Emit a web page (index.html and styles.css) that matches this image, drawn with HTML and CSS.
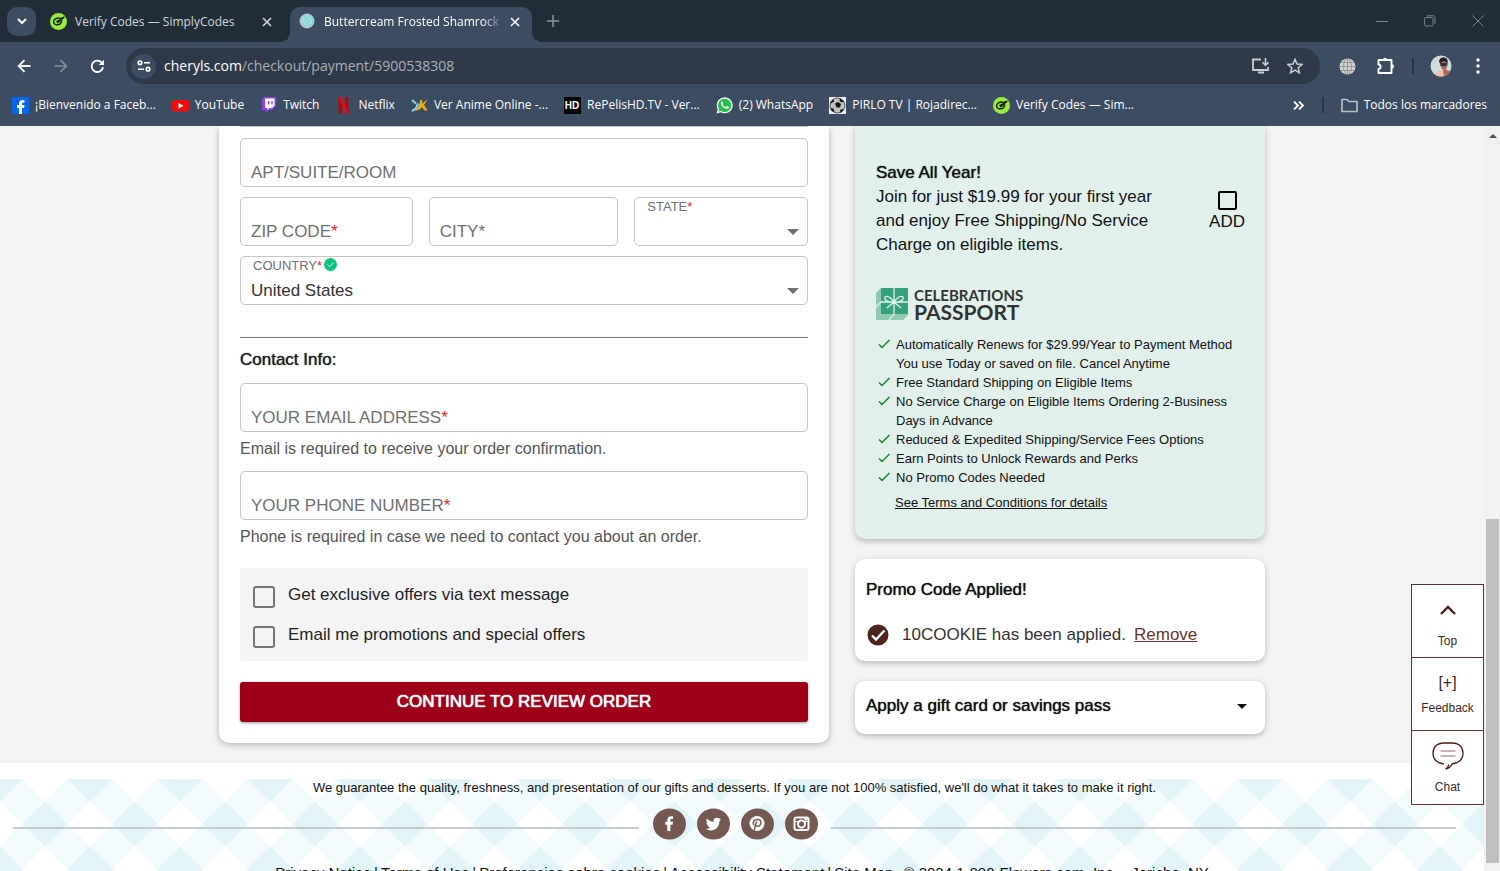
FILE: index.html
```html
<!DOCTYPE html>
<html lang="en">
<head>
<meta charset="utf-8">
<title>Buttercream Frosted Shamrock</title>
<link rel="stylesheet" href="styles.css">
</head>
<body>
<svg class="defs" aria-hidden="true">
  <symbol id="codes" viewBox="0 0 18 18"><circle cx="9" cy="9" r="9" fill="#9bea3f"/><path d="M10.500 5.500C7 4.500 3.500 7 3.800 9.800c.3 2.900 5 3.700 7.400 1.200 1-1 1.300-2 1.100-3M7 8.300l1.500 2L14.800 4.500 9.500 6.500M8 8l3 .5" fill="none" stroke="#172611" stroke-width="1.500" stroke-linejoin="round"/></symbol>
  <symbol id="caret" viewBox="0 0 12 6"><path d="M0 0h12L6 6z" fill="currentColor"/></symbol>
  <symbol id="close" viewBox="0 0 10 10"><path d="M1 1l8 8M9 1L1 9" stroke="currentColor" stroke-width="1.600"/></symbol>
  <symbol id="tick" viewBox="0 0 12 10"><path d="M1 5.500l3 3L11.500 1" fill="none" stroke="#15852a" stroke-width="1.500"/></symbol>
</svg>

<header class="browser">
  <div class="tabstrip">
    <button class="tab-search" aria-label="Search tabs"><svg width="10" height="8" viewBox="0 0 10 8"><path d="M1 2l4 4 4-4" fill="none" stroke="#fff" stroke-width="2"/></svg></button>
    <div class="tab">
      <svg class="favicon"><use href="#codes"/></svg>
      <span class="tab-title">Verify Codes — SimplyCodes</span>
      <button class="tab-close" aria-label="Close tab"><svg width="10" height="10"><use href="#close"/></svg></button>
    </div>
    <div class="tab tab-active">
      <svg class="favicon" viewBox="0 0 17 17"><circle cx="8" cy="8" r="7" fill="#8ed5dc" stroke="#c8c9bd"/><path d="M4 5h1M8 3h1M11 6h1M6 8h1M10 10h1M5 11h1M8 13h1M12 9h1M3 8h1" stroke="#d5f2f1"/></svg>
      <span class="tab-title tab-fade">Buttercream Frosted Shamrock</span>
      <button class="tab-close" aria-label="Close tab"><svg width="10" height="10"><use href="#close"/></svg></button>
    </div>
    <button class="new-tab" aria-label="New tab"><svg width="12" height="12" viewBox="0 0 12 12"><path d="M6 0v12M0 6h12" stroke="currentColor" stroke-width="1.500"/></svg></button>
    <div class="window-controls">
      <button aria-label="Minimize"><svg width="12" height="12" viewBox="0 0 12 12"><path d="M0 6.500h12" stroke="currentColor"/></svg></button>
      <button aria-label="Restore"><svg width="12" height="12" viewBox="0 0 12 12"><rect x=".5" y="2.500" width="8.500" height="8.500" rx="1.500" fill="none" stroke="currentColor"/><path d="M3 .8h6a2 2 0 0 1 2 2v6" fill="none" stroke="currentColor"/></svg></button>
      <button aria-label="Close"><svg width="12" height="12" viewBox="0 0 12 12"><path d="M.5.500l11 11M11.500.500l-11 11" stroke="currentColor"/></svg></button>
    </div>
  </div>

  <div class="toolbar">
    <button class="nav" aria-label="Back"><svg width="14" height="14" viewBox="0 0 14 14"><path d="M13.500 7H2M7.500 1.200L1.700 7l5.800 5.800" fill="none" stroke="#fff" stroke-width="1.900"/></svg></button>
    <button class="nav" aria-label="Forward"><svg width="14" height="14" viewBox="0 0 14 14"><path d="M.5 7H12M6.500 1.200L12.300 7l-5.800 5.800" fill="none" stroke="#8490a0" stroke-width="1.700"/></svg></button>
    <button class="nav" aria-label="Reload"><svg width="15" height="15" viewBox="0 0 15 15"><path d="M13 8.200A5.700 5.700 0 1 1 11.700 3.600L13 5" fill="none" stroke="#fff" stroke-width="1.900"/><path d="M14 .8v5.200H8.800z" fill="#fff"/></svg></button>
    <div class="omnibox">
      <button class="site-info" aria-label="Site information"><svg width="14" height="12" viewBox="0 0 14 12"><g fill="none" stroke="#fff" stroke-width="1.600"><circle cx="3" cy="2.800" r="1.800"/><path d="M7 2.800h6M1 9.200h6"/><circle cx="11" cy="9.200" r="1.800"/></g></svg></button>
      <div class="url">cheryls.com<span>/checkout/payment/5900538308</span></div>
      <button class="omni-action" aria-label="Install app"><svg width="18" height="16" viewBox="0 0 18 16"><path d="M9 1.500H1v10.500h15V9M6 14.500h6" fill="none" stroke="#c9cdd2" stroke-width="1.800"/><path d="M13.500 0v7M10.500 4.300l3 3 3-3" fill="none" stroke="#c9cdd2" stroke-width="1.600"/></svg></button>
      <button class="omni-action" aria-label="Bookmark this page"><svg width="16" height="16" viewBox="0 0 16 16"><path d="M8 1.400l2 4.700 5.100.4-3.900 3.300 1.200 5L8 12.100l-4.400 2.700 1.200-5L.9 6.500 6 6.100z" fill="none" stroke="#c9cdd2" stroke-width="1.500"/></svg></button>
    </div>
    <button class="extension" aria-label="Web extension"><svg width="17" height="17" viewBox="0 0 17 17"><circle cx="8.500" cy="8.500" r="8" fill="#d3d3d1"/><g fill="none" stroke="#858a8e" stroke-width=".8"><ellipse cx="8.500" cy="8.500" rx="4" ry="8"/><path d="M8.500.5v16M.5 8.500h16M1.800 4.500h13.400M1.800 12.500h13.400"/></g></svg></button>
    <button class="extension" aria-label="Extensions"><svg width="18" height="18" viewBox="0 0 18 18"><path d="M1.500 3h13v13h-13v-4c2.800-.4 2.800-4.100 0-4.500z" fill="none" stroke="#fff" stroke-width="1.900" stroke-linejoin="round"/><path d="M5.800 3a2.200 2.200 0 0 1 4.400 0zM14.800 7.300a2.200 2.200 0 0 1 0 4.400z" fill="#fff"/></svg></button>
    <span class="divider"></span>
    <button class="extension" aria-label="Profile"><svg width="22" height="22" viewBox="0 0 22 22"><defs><clipPath id="face"><circle cx="11" cy="11" r="10.500"/></clipPath></defs><g clip-path="url(#face)"><path fill="#cfdbdd" d="M0 0h22v22H0z"/><path d="M5 22c0-6 4-7 7-8l6 2v6z" fill="#efc2b8"/><path d="M10 5l6-1 2 5-2 6-4-1-2-4z" fill="#a66b52"/><path d="M9 7c0-4 4-6 8-3l1 4-4-2-4 2z" fill="#221d20"/><path d="M10 8h7l-1 3h-5z" fill="#26324b"/><path d="M13 14l7 2v6h-6z" fill="#b16651"/></g></svg></button>
    <button class="menu" aria-label="Menu"><svg width="4" height="16" viewBox="0 0 4 16" fill="#fff"><circle cx="2" cy="2" r="1.700"/><circle cx="2" cy="8" r="1.700"/><circle cx="2" cy="14" r="1.700"/></svg></button>
  </div>

  <nav class="bookmarks">
    <a href="#"><svg class="favicon" viewBox="0 0 17 17"><path fill="#0866e8" d="M0 0h17v17H0z"/><path d="M7 17v-6H5V8h2V6.500C7 4 8.500 3 10.500 3l2 .2v2.500h-1.300c-1 0-1.200.5-1.200 1.200V8h2.500l-.5 3h-2v6z" fill="#fff"/></svg>¡Bienvenido a Faceb...</a>
    <a href="#"><svg class="favicon" viewBox="0 0 17 17"><rect y="3" width="17" height="11.500" rx="3" fill="#f30a0a"/><path d="M6.500 6l5 2.800-5 2.800z" fill="#fff"/></svg>YouTube</a>
    <a href="#"><svg class="favicon" viewBox="0 0 17 17"><path d="M4 0h12v9l-4 4H9l-3 3v-3H2V3z" fill="#8f43ef"/><path d="M5 1.500h9.500v7L12 11H9.500L7.300 13v-2H5z" fill="#fff"/><path d="M8.700 4v3.500M12 4v3.500" stroke="#8f43ef" stroke-width="1.400"/></svg>Twitch</a>
    <a href="#"><svg class="favicon" viewBox="0 0 17 17"><path d="M3.500 0H7v16.500l-3.500.500zM10 0h3.500v17l-3.500-.5z" fill="#a40b13"/><path d="M3.500 0H7l6.500 17L10 16.500z" fill="#e20d17"/></svg>Netflix</a>
    <a href="#"><svg class="favicon" viewBox="0 0 17 17"><path d="M4 13.500c3-1.500 4.500-5 5-10 1-1 2.500-.5 2.500 1l-.5 2.500L16.500 2l-3.500 6 3.500 5.500c-2 .8-4-1-5.500-3.500-2 2.500-4 4-7 3.500z" fill="#f2b115"/><path d="M1 3l4 3.500M1 14l4-2.500 2-5" stroke="#8fd0e6" stroke-width="2.200" fill="none"/></svg>Ver Anime Online -...</a>
    <a href="#"><svg class="favicon" viewBox="0 0 17 17"><path fill="#050505" d="M0 0h17v17H0z"/><text x="8" y="12" class="hd" text-anchor="middle">HD</text></svg>RePelisHD.TV - Ver...</a>
    <a href="#"><svg class="favicon" viewBox="0 0 17 17"><path d="M.5 16.500l1.200-4.300A8 8 0 1 1 4.800 15.300z" fill="#fff"/><path d="M2.200 14.800l.8-2.800a6.700 6.700 0 1 1 2 2z" fill="#25c04a"/><path d="M5.200 5c.8-1 1.500-.7 1.900.7L6.600 7c.6 1.500 1.700 2.500 3.200 3.100l1.200-1.200 2 1.100c-.2 1.500-1.500 2.200-3 1.800C7.500 11 5.200 9 4.900 6.500z" fill="#fff"/></svg>(2) WhatsApp</a>
    <a href="#"><svg class="favicon" viewBox="0 0 17 17"><path fill="#eee" d="M0 0h17v17H0z"/><circle cx="8.500" cy="8.500" r="7.500" fill="#bfc1c4" stroke="#555"/><path d="M6 6.500l3-1.500 3 2-1 3.500H7.500zM1.500 5l3-3 .5 2.500-3 2zM11 1.500l4 3-2 1-2.500-1.500zM1.500 11l3 .5 1 3.500-3-1zM11 13l3-1 .8 1-3.300 3z" fill="#171719"/></svg>PIRLO TV | Rojadirec...</a>
    <a href="#"><svg class="favicon"><use href="#codes"/></svg>Verify Codes — Sim...</a>
    <button class="overflow" aria-label="More bookmarks"><svg width="11" height="9" viewBox="0 0 11 9"><path d="M1 .5l4 4-4 4M6 .5l4 4-4 4" fill="none" stroke="#fff" stroke-width="1.800"/></svg></button>
    <span class="divider"></span>
    <a href="#" class="all-bookmarks"><svg class="favicon" viewBox="0 0 17 17"><path d="M1 2.500h5l2 2h8v10H1z" fill="none" stroke="#b9bfc6" stroke-width="1.700" stroke-linejoin="round"/></svg>Todos los marcadores</a>
  </nav>
</header>

<div class="viewport">
  <div class="page">
    <main class="checkout">
      <form class="card address-card">
        <div class="fields">
          <div class="field">
            <input id="apt" type="text"><label for="apt">APT/SUITE/ROOM</label>
          </div>
          <div class="field-row">
            <div class="field"><input id="zip" type="text"><label for="zip">ZIP CODE<em>*</em></label></div>
            <div class="field"><input id="city" type="text"><label for="city">CITY*</label></div>
            <div class="field field-select"><select id="state"><option></option></select><label for="state">STATE<em>*</em></label><svg class="caret"><use href="#caret"/></svg></div>
          </div>
          <div class="field field-select">
            <select id="country"><option>United States</option></select>
            <label for="country">COUNTRY<em>*</em><svg class="valid" width="13" height="13" viewBox="0 0 13 13"><circle cx="6.500" cy="6.500" r="6.500" fill="#0ac47c"/><path d="M3.500 6.500l2.200 2.200 3.800-4" fill="none" stroke="#fff"/></svg></label>
            <svg class="caret"><use href="#caret"/></svg>
          </div>
        </div>
        <hr class="rule">
        <h2 class="heading">Contact Info:</h2>
        <div class="field"><input id="email" type="email"><label for="email">YOUR EMAIL ADDRESS<em>*</em></label></div>
        <p class="hint">Email is required to receive your order confirmation.</p>
        <div class="field"><input id="phone" type="tel"><label for="phone">YOUR PHONE NUMBER<em>*</em></label></div>
        <p class="hint">Phone is required in case we need to contact you about an order.</p>
        <div class="optins">
          <label><input type="checkbox">Get exclusive offers via text message</label>
          <label><input type="checkbox">Email me promotions and special offers</label>
        </div>
        <button class="continue" type="button">CONTINUE TO REVIEW ORDER</button>
      </form>

      <aside class="side">
        <section class="card passport">
          <div class="offer">
            <div>
              <h2 class="heading">Save All Year!</h2>
              <p>Join for just $19.99 for your first year and enjoy Free Shipping/No Service Charge on eligible items.</p>
            </div>
            <label class="add"><input type="checkbox">ADD</label>
          </div>
          <div class="logo">
            <svg width="32" height="32" viewBox="0 0 32 32"><path d="M0 5l5-5h27v27l-5 5H0z" fill="#8dcbb0"/><path d="M5 0h27v26H5z" fill="#36a27b"/><path d="M18 0v26l-5 6M5 14h27M5 14l-5 5M18 14C13 7 8 7 9 11c1 3 6 3 9 3 5-7 10-7 9-3-1 3-6 3-9 3l-7 6M18 14l7 6" fill="none" stroke="#dff3ea" stroke-width="1.300"/></svg>
            <div class="logo-text"><span class="logo-top">CELEBRATIONS</span><span class="logo-bottom">PASSPORT</span></div>
          </div>
          <ul class="benefits">
            <li><svg class="tick"><use href="#tick"/></svg><span>Automatically Renews for $29.99/Year to Payment Method You use Today or saved on file. Cancel Anytime</span></li>
            <li><svg class="tick"><use href="#tick"/></svg><span>Free Standard Shipping on Eligible Items</span></li>
            <li><svg class="tick"><use href="#tick"/></svg><span>No Service Charge on Eligible Items Ordering 2-Business Days in Advance</span></li>
            <li><svg class="tick"><use href="#tick"/></svg><span>Reduced &amp; Expedited Shipping/Service Fees Options</span></li>
            <li><svg class="tick"><use href="#tick"/></svg><span>Earn Points to Unlock Rewards and Perks</span></li>
            <li><svg class="tick"><use href="#tick"/></svg><span>No Promo Codes Needed</span></li>
          </ul>
          <a class="terms" href="#">See Terms and Conditions for details</a>
        </section>
        <section class="card promo">
          <h2 class="heading">Promo Code Applied!</h2>
          <div class="applied">
            <svg width="22" height="22" viewBox="0 0 22 22"><circle cx="11" cy="11" r="10.500" fill="#4d241e"/><path d="M5 11.500l4 4 8.500-9" fill="none" stroke="#fff" stroke-width="2.400"/></svg>
            <span>10COOKIE has been applied.</span><a href="#">Remove</a>
          </div>
        </section>
        <button class="card gift" type="button"><span class="heading">Apply a gift card or savings pass</span><svg width="10" height="5"><use href="#caret"/></svg></button>
      </aside>
    </main>

    <footer class="footer">
      <div class="gingham">
        <p class="guarantee">We guarantee the quality, freshness, and presentation of our gifts and desserts. If you are not 100% satisfied, we'll do what it takes to make it right.</p>
        <div class="social">
          <hr>
          <a href="#" aria-label="Facebook"><svg viewBox="0 0 33 31"><ellipse cx="16.500" cy="15.500" rx="16.500" ry="15.500"/><path d="M14.300 22.500v-6.300h-2v-3h2v-1.700c0-2.500 1.500-3.800 3.700-3.800h2v2.800h-1.400c-1 0-1.200.4-1.200 1.200v1.500H20l-.4 3h-2.200v6.300z" fill="#fff"/></svg></a>
          <a href="#" aria-label="Twitter"><svg viewBox="0 0 33 31"><ellipse cx="16.500" cy="15.500" rx="16.500" ry="15.500"/><path d="M24 11.300l-1.700 1.600c0 5.500-4 9-8.300 9-2 0-3.800-.5-5-1.400 1.700 0 3.300-.4 4.500-1.400-1.500 0-2.500-1-2.900-2.100h1.300c-1.600-.4-2.500-1.600-2.500-3.100l1.400.3c-1.400-1-1.900-2.700-1-4.200 1.700 2 4 3.100 6.700 3.300-.6-4 3.200-4.900 5.100-3.200l2-.8-1.300 1.800z" fill="#fff"/></svg></a>
          <a href="#" aria-label="Pinterest"><svg viewBox="0 0 33 31"><ellipse cx="16.500" cy="15.500" rx="16.500" ry="15.500"/><circle cx="16" cy="15" r="7.500" fill="#fff"/><path d="M13 22.500l2.500-9.500M13 16.800c-3.500-5 5-8.200 6.800-3.900 1 3-2.300 6.500-4.600 4" fill="none" stroke="#755851" stroke-width="1.500"/></svg></a>
          <a href="#" aria-label="Instagram"><svg viewBox="0 0 33 31"><ellipse cx="16.500" cy="15.500" rx="16.500" ry="15.500"/><rect x="9.500" y="9" width="14" height="12.500" rx="2" fill="none" stroke="#fff" stroke-width="2"/><path d="M9 13h4M20 13h4" stroke="#fff"/><circle cx="16.500" cy="15.500" r="3.500" fill="none" stroke="#fff" stroke-width="2"/><path d="M19.500 9.500h3v2.500h-3z" fill="#fff"/></svg></a>
          <hr>
        </div>
        <div class="legal">
          <a href="#">Privacy Notice</a> | <a href="#">Terms of Use</a> | <a href="#">Preferencias sobre cookies</a> | <a href="#">Accessibility Statement</a> | <a href="#">Site Map</a>
          <span class="copyright">© 2024 1-800-Flowers.com, Inc.,</span><span>Jericho, NY</span>
        </div>
      </div>
    </footer>

    <div class="quick">
      <button><svg width="16" height="10" viewBox="0 0 16 10"><path d="M1 9l7-7 7 7" fill="none" stroke="#4b211b" stroke-width="2.400"/></svg>Top</button>
      <button><span class="plus">[+]</span>Feedback</button>
      <button><svg width="32" height="28" viewBox="0 0 32 28"><path d="M12 22C4 21 1 17 1 11.500 1 5 5 1 12 1h8c7 0 11 4 11 10.500S27 21 20 22c-1 2.500-3 4.500-6.500 5 2-1 3-2.500 3.500-4.500" fill="none" stroke="#4b211b" stroke-width="1.300"/><path d="M8.500 9h15M8.500 14h15" stroke="#8d6c67"/></svg>Chat</button>
    </div>
  </div>
  <div class="scrollbar"><svg width="8" height="4" viewBox="0 0 8 4"><path d="M4 0l4 4H0z" fill="#4d4d4d"/></svg><div class="thumb"></div></div>
</div>
</body>
</html>
```

FILE: styles.css
```css
* { box-sizing: border-box; }
body {
  margin: 0;
  height: 100vh;
  display: flex;
  flex-direction: column;
  overflow: hidden;
  background: #f3f3f3;
  color: #1f1f1f;
  font: 17px/24px "Liberation Sans", Arial, sans-serif;
}
button, input, select { font: inherit; color: inherit; }
button { border: 0; padding: 0; background: none; cursor: pointer; }
h2, p, ul { margin: 0; padding: 0; }
a { color: inherit; text-decoration: none; }
em { color: #e8232c; font-style: normal; }
svg { display: block; flex: none; }
.defs { position: absolute; width: 0; height: 0; }

/* Browser chrome */
.browser {
  flex: none;
  background: #3b4c63;
  color: #fff;
  font: 12px/16px "Open Sans", "Noto Sans", sans-serif;
}
.browser button { display: flex; align-items: center; justify-content: center; }
.favicon { width: 17px; height: 17px; }
.tabstrip { display: flex; align-items: center; height: 42px; background: #212e3a; padding-left: 7px; }
.tab-search { width: 29px; height: 29px; border-radius: 10px; background: #3b4c63; }
.tab { display: flex; align-items: center; gap: 8px; width: 254px; height: 35px; margin-top: 7px; padding: 0 16px 6px 14px; color: #d0d5da; }
.tab-title { flex: 1; min-width: 0; white-space: nowrap; overflow: hidden; }
.tab-close { width: 14px; height: 16px; }
.tab-active { position: relative; width: 242px; padding-left: 9px; padding-right: 10px; background: #3b4c63; color: #fff; border-radius: 10px 10px 0 0; }
.tab-active .tab-title { margin-right: -4px; }
.tab-active::before, .tab-active::after { content: ""; position: absolute; bottom: 0; width: 10px; height: 10px; }
.tab-active::before { right: 100%; background: radial-gradient(circle at 0 0, #212e3a 10px, #3b4c63 10px); }
.tab-active::after { left: 100%; background: radial-gradient(circle at 100% 0, #212e3a 10px, #3b4c63 10px); }
.tab-fade { -webkit-mask-image: linear-gradient(to right, #000 88%, transparent); mask-image: linear-gradient(to right, #000 88%, transparent); }
.new-tab { margin-left: 14px; width: 14px; height: 24px; color: #8b949d; }
.window-controls { display: flex; margin-left: auto; color: #78838d; }
.window-controls button { width: 48px; height: 42px; }
.window-controls button:last-child { margin-right: -2px; }

.toolbar { display: flex; align-items: center; height: 42px; padding: 6px 14px 0 5px; }
.nav { width: 37px; height: 36px; }
.omnibox { flex: 1; display: flex; align-items: center; height: 36px; margin-left: 10px; padding: 0 16px 0 5px; border-radius: 18px; background: #2e3a49; }
.site-info { width: 25px; height: 25px; border-radius: 50%; background: #3b4c63; }
.url { flex: 1; margin-left: 8px; font-size: 14px; line-height: 20px; }
.url span { color: #a9b0b8; }
.omni-action { width: 18px; margin-left: 16px; height: 24px; }
.extension { margin-left: 21px; width: 17px; }
.omnibox + .extension { margin-left: 19px; }
.divider { width: 2px; height: 16px; background: #26364a; }
.toolbar .divider { margin-left: 18px; }
.toolbar .divider + .extension { margin-left: 18px; }
.menu { width: 16px; margin-left: 21px; }
.bookmarks { display: flex; align-items: center; height: 42px; padding: 0 13px 0 12px; white-space: nowrap; }
.bookmarks a { display: flex; align-items: center; gap: 6px; margin-right: 16px; }
.bookmarks .overflow { margin-left: auto; width: 20px; height: 20px; }
.bookmarks .divider { margin: 0 17px 0 13px; }
.bookmarks .all-bookmarks { margin-right: 0; }
.hd { fill: #fff; font: 700 10px "Liberation Sans", sans-serif; }

/* Page */
.viewport { flex: 1; min-height: 0; display: flex; }
.page { position: relative; flex: 1; min-width: 0; overflow: hidden; }
.scrollbar { width: 16px; flex: none; display: flex; flex-direction: column; align-items: center; background: #f1f1f1; padding: 8px 1px 8px 2px; }
.thumb { width: 100%; height: 344px; margin-top: auto; background: #bfbfbf; }
.checkout { display: grid; grid-template-columns: 610fr 410fr; gap: 26px; max-width: 1046px; margin: 0 auto; padding-bottom: 20px; align-items: start; }
.card { border-radius: 10px; background: #fff; box-shadow: 0 2px 6px rgba(0, 0, 0, .25); }
.heading { font-size: 17px; font-weight: 400; line-height: 24px; text-shadow: 0 0 1px currentColor; }

.address-card { border-radius: 0 0 10px 10px; padding: 0 21px 21px; }
.fields { display: grid; gap: 10px; padding-top: 11px; border-top: 1px solid #c4c4c4; }
.field-row { display: grid; grid-template-columns: 173fr 190fr 174fr; gap: 16px; }
.field { display: grid; height: 49px; }
.field > * { grid-area: 1 / 1; }
.field input, .field select { width: 100%; min-width: 0; height: 49px; border: 1px solid #c6c6c6; border-radius: 5px; background: #fff; padding: 20px 10px 0; outline: 0; color: #333; }
.field select { appearance: none; }
.field label { align-self: end; justify-self: start; padding: 0 11px 2px; color: #707070; pointer-events: none; }
.field-select label { display: flex; align-items: center; align-self: start; padding: 2px 13px 0; font-size: 13px; line-height: 16px; }
.valid { margin: 0 0 3px 2px; }
.caret { width: 12px; height: 6px; align-self: end; justify-self: end; margin: 0 9px 11px 0; color: #707070; pointer-events: none; }
.rule { height: 1px; margin: 32px 0 10px; border: 0; background: #777; }
.address-card .heading { margin-bottom: 11px; }
.hint { margin: 7px 0 12px; font-size: 16px; line-height: 20px; color: #555; }
.optins { display: grid; gap: 16px; margin-top: 21px; padding: 15px 13px 14px; border-radius: 3px; background: #f4f4f4; }
.optins label { display: flex; gap: 13px; height: 24px; align-items: center; }
.optins input { appearance: none; width: 22px; height: 22px; margin: 4px 0 0; border: 2px solid #757575; border-radius: 3px; }
.continue { display: block; width: 100%; height: 40px; margin-top: 21px; border-radius: 3px; background: #9e0018; color: #fff; text-shadow: 0 0 1px #fff, 0 0 1px #fff; box-shadow: 0 1px 3px rgba(0, 0, 0, .4); }

.side { display: grid; gap: 20px; color: #111; }
.passport { border-radius: 0 0 10px 10px; background: #e1f0eb; padding: 35px 20px 25px 21px; }
.offer { display: flex; justify-content: space-between; }
.offer > div { width: 284px; }
.add { display: flex; flex-direction: column; align-items: center; margin-top: 30px; line-height: 24px; }
.add input { appearance: none; width: 19px; height: 19px; margin: 0; border: 2px solid #000; border-radius: 2px; }
.logo { display: flex; gap: 6px; margin-top: 31px; color: #333; }
.logo-text { display: flex; flex-direction: column; font-family: Lato, sans-serif; font-weight: 700; }
.logo-top { font-size: 15px; line-height: 15px; }
.logo-bottom { font-size: 21px; line-height: 17px; }
.benefits { list-style: none; margin-top: 15px; font-size: 13px; line-height: 19px; }
.benefits li { display: flex; gap: 6px; }
.tick { width: 12px; height: 10px; margin: 4px 0 0 2px; }
.terms { display: inline-block; margin: 6px 0 0 19px; font-size: 13px; line-height: 19px; text-decoration: underline; }
.promo { padding: 19px 11px 14px; }
.applied { display: flex; align-items: center; margin-top: 21px; padding-left: 1px; color: #333; }
.applied span { margin: 0 8px 0 13px; }
.applied a { color: #66352e; text-decoration: underline; }
.gift { display: flex; align-items: center; justify-content: space-between; height: 53px; padding: 0 18px 3px 11px; color: #111; }

/* Footer: 90px gingham tile, a darker diamond at each corner and one in the middle */
.footer { padding-top: 16px; background: #fff; color: #111; }
.gingham {
  height: 140px;
  background-image: url("data:image/svg+xml,%3Csvg xmlns='http://www.w3.org/2000/svg' width='90' height='90' viewBox='0 0 4 4'%3E%3Cpath fill='%23f2fafc' d='M0 0h4v4H0z'/%3E%3Cpath fill='%23e3f4f8' d='M2 1l1 1-1 1-1-1zM0 0h1L0 1zM4 0v1L3 0zM0 4V3l1 1zM4 4H3l1-1z'/%3E%3Cpath fill='%23fff' d='M1 0h2L2 1zM1 4l1-1 1 1zM0 1l1 1-1 1zM4 1v2L3 2z'/%3E%3C/svg%3E");
  background-size: 90px 90px;
}
.guarantee { padding-right: 15px; font-size: 13px; line-height: 18px; text-align: center; }
.social { display: flex; align-items: center; gap: 11px; margin: 11px 28px 0 13px; }
.social hr { flex: 1; height: 2px; margin: 7px 3px 0 0; border: 0; background: #c3cccf; }
.social hr:last-child { margin: 7px 0 0 2px; }
.social a svg { width: 33px; height: 32px; fill: #755851; }
.legal { display: flex; justify-content: center; gap: 3px; margin-top: 23px; font-size: 15px; line-height: 20px; white-space: nowrap; }
.copyright { margin: 0 7px; }

.quick { position: absolute; right: 0; top: 458px; width: 73px; border: 1px solid #5b332d; background: #fff; }
.quick button { display: flex; flex-direction: column; align-items: center; justify-content: space-between; width: 100%; height: 72px; padding: 20px 0 7px; font-size: 12px; line-height: 18px; color: #3b2925; }
.quick button + button { height: 73px; border-top: 1px solid #5b332d; padding-top: 14px; padding-bottom: 13px; }
.quick button:last-child { height: 74px; padding-top: 11px; padding-bottom: 8px; }
.plus { font-size: 16px; line-height: 22px; }
```
